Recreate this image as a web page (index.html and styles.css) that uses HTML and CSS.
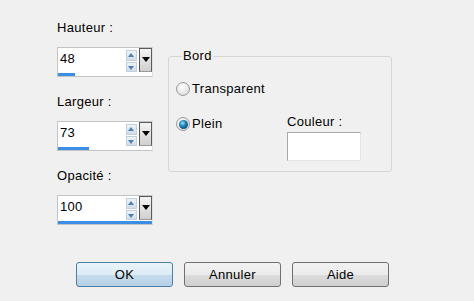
FILE: index.html
```html
<!DOCTYPE html>
<html lang="fr">
<head>
    <meta charset="UTF-8">
    <title>Bordure</title>
    <link rel="stylesheet" href="styles.css">
</head>
<body>
    <div class="main">
        <div class="fields">
            <div class="field">
                <label class="label">Hauteur :</label>
                <div class="spin">
                    <div class="spin-row">
                        <span class="value">48</span>
                        <span class="arrows"><span class="up"></span><span class="down"></span></span>
                        <span class="drop"><span class="tri"></span></span>
                    </div>
                    <div class="bar"><div class="bar-fill" style="width: 17px"></div></div>
                </div>
            </div>
            <div class="field">
                <label class="label">Largeur :</label>
                <div class="spin">
                    <div class="spin-row">
                        <span class="value">73</span>
                        <span class="arrows"><span class="up"></span><span class="down"></span></span>
                        <span class="drop"><span class="tri"></span></span>
                    </div>
                    <div class="bar"><div class="bar-fill" style="width: 31px"></div></div>
                </div>
            </div>
            <div class="field">
                <label class="label">Opacité :</label>
                <div class="spin">
                    <div class="spin-row">
                        <span class="value">100</span>
                        <span class="arrows"><span class="up"></span><span class="down"></span></span>
                        <span class="drop"><span class="tri"></span></span>
                    </div>
                    <div class="bar"><div class="bar-fill" style="width: 100%"></div></div>
                </div>
            </div>
        </div>

        <fieldset class="group">
            <legend>Bord</legend>
            <div class="group-grid">
                <div class="radio"><span class="dot"></span>Transparent</div>
                <div></div>
                <div class="radio second"><span class="dot checked"></span>Plein</div>
                <div class="colour">
                    <div class="colour-label">Couleur :</div>
                    <div class="swatch"></div>
                </div>
            </div>
        </fieldset>
    </div>

    <div class="buttons">
        <button class="btn default">OK</button>
        <button class="btn">Annuler</button>
        <button class="btn">Aide</button>
    </div>
</body>
</html>
```

FILE: styles.css
```css
body {
    margin: 0;
    background: #f0f0f0;
    font-family: "Liberation Sans", Arial, sans-serif;
    font-size: 13px;
    letter-spacing: 0.3px;
    color: #000;
    width: 474px;
    height: 301px;
    overflow: hidden;
}
.main {
    display: flex;
    padding: 20px 0 0 57px;
}
.fields {
    width: 96px;
}
.field {
    margin-bottom: 17px;
}
.label {
    display: block;
    line-height: 16px;
    margin-bottom: 11px;
}
.spin {
    box-sizing: border-box;
    width: 96px;
    height: 30px;
    border: 1px solid #c3c3c3;
    border-right-color: #e2e2e2;
    background: #fff;
    display: flex;
    flex-direction: column;
}
.spin-row {
    display: flex;
    flex: 1;
}
.value {
    flex: 1;
    padding: 3px 0 0 2px;
    line-height: 16px;
}
.arrows {
    width: 11px;
    margin: 2px 1px 0 0;
    display: flex;
    flex-direction: column;
    gap: 1px;
}
.up, .down {
    flex: 1;
    background: linear-gradient(#eef3f8, #d3dde8);
    border: 1px solid #c2cfdc;
    position: relative;
}
.up::after, .down::after {
    content: "";
    position: absolute;
    left: 1px;
    border-left: 3.5px solid transparent;
    border-right: 3.5px solid transparent;
}
.up::after {
    top: 2px;
    border-bottom: 4px solid #4f7fb3;
}
.down::after {
    top: 3px;
    border-top: 4px solid #4f7fb3;
}
.drop {
    width: 11px;
    margin: 0 0 0 1px;
    border: 1px solid #5a5a5a;
    border-bottom-color: #9a9a9a;
    background: linear-gradient(#f4f4f4, #d0d0d0);
    display: flex;
    justify-content: center;
    padding-top: 8px;
}
.tri {
    width: 0;
    height: 0;
    border-left: 4px solid transparent;
    border-right: 4px solid transparent;
    border-top: 5px solid #000;
}
.bar {
    height: 4px;
    background: #fff;
}
.bar-fill {
    height: 3px;
    margin-top: 1px;
    background: #3a8ee6;
}
.group {
    margin: 28px 0 0 15px;
    padding: 17px 0 9px 7px;
    width: 224px;
    height: 124px;
    box-sizing: border-box;
    border: 1px solid #d5d5d5;
    border-radius: 3px;
}
.group legend {
    padding: 0 1px;
    margin-left: 6px;
    line-height: 16px;
}
.group-grid {
    display: grid;
    grid-template-columns: 111px auto;
}
.radio {
    display: flex;
    align-items: center;
    line-height: 16px;
}
.radio.second {
    margin-top: 19px;
    align-self: start;
}
.dot {
    box-sizing: border-box;
    width: 14px;
    height: 14px;
    border-radius: 50%;
    border: 1px solid #9a9a9a;
    background: radial-gradient(circle at 40% 35%, #ffffff, #d4d4d4);
    margin-right: 2px;
    display: inline-flex;
    align-items: center;
    justify-content: center;
}
.dot.checked::after {
    content: "";
    width: 9px;
    height: 9px;
    border-radius: 50%;
    background: radial-gradient(circle at 40% 35%, #9fe3ff, #1a7fb4 40%, #0a3558);
}
.colour {
    margin-top: 17px;
}
.colour-label {
    line-height: 16px;
    margin-bottom: 2px;
}
.swatch {
    box-sizing: border-box;
    width: 74px;
    height: 29px;
    background: #fff;
    border: 1px solid #a8a8a8;
    border-right-color: #e4e4e4;
    border-bottom-color: #e4e4e4;
}
.buttons {
    display: flex;
    gap: 11px;
    padding-left: 76px;
    margin-top: 20px;
}
.btn {
    width: 97px;
    height: 25px;
    font-family: inherit;
    font-size: 13px;
    letter-spacing: 0.3px;
    color: #000;
    border: 1px solid #707070;
    border-radius: 3px;
    background: linear-gradient(#f2f2f2 0%, #ebebeb 50%, #dddddd 51%, #cfcfcf 100%);
    padding: 0;
}
.btn.default {
    border-color: #4a7fa8;
    background: linear-gradient(#eaf3f9 0%, #dcebf5 50%, #c6dcec 51%, #b5d0e4 100%);
}
```
